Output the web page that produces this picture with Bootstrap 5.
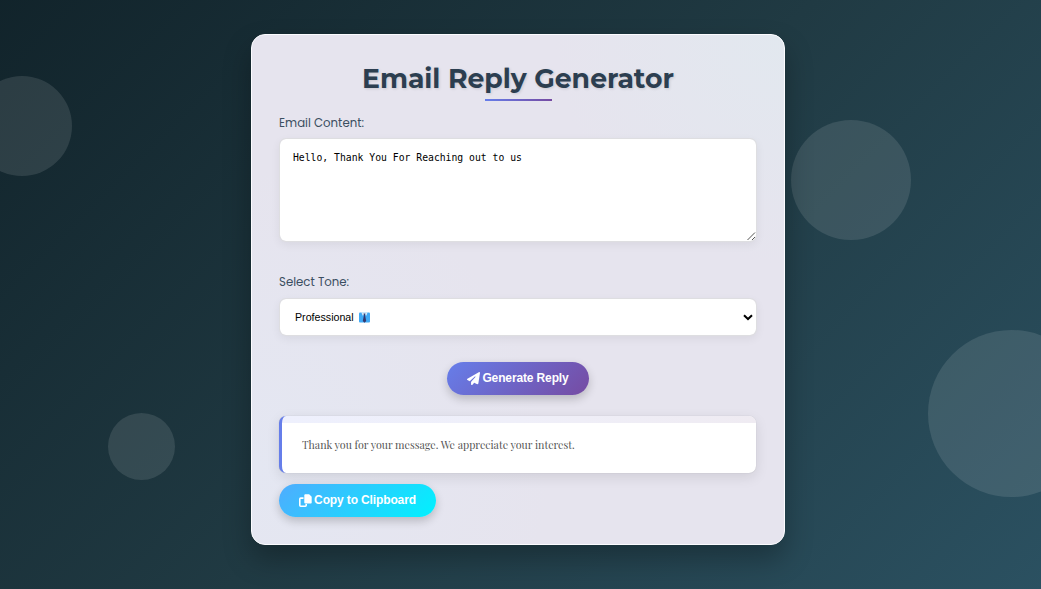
<!DOCTYPE html>
<html lang="en">
<head>
<meta charset="utf-8">
<meta name="viewport" content="width=device-width, initial-scale=1">
<title>Email Reply Generator</title>
<link rel="stylesheet" href="https://cdn.jsdelivr.net/npm/bootstrap@5.3.0/dist/css/bootstrap.min.css">
<style>
body{background:linear-gradient(135deg,#0f2027 -8%,#203a43 50%,#2c5364 105%);min-height:589px;height:100vh;overflow:hidden;font-family:"Liberation Sans",sans-serif}
.orb{border-radius:50%;background:rgba(255,255,255,.11)}
.orb-a{width:100px;height:100px;left:-28px;top:76px}
.orb-b{width:120px;height:120px;left:791px;top:120px}
.orb-wrap{width:113px;height:167px;left:928px;top:330px;overflow:hidden}
.orb-c{width:167px;height:167px}
.orb-d{width:67px;height:67px;left:108px;top:413px}
.panel{width:534px;height:511px;margin:34px 0 0 251px;padding:27px;border:1px solid #fcfcff;border-radius:14px;
background:radial-gradient(circle at 100% 0,#e2e8ef 0,rgba(226,232,239,0) 230px),radial-gradient(circle at 0 85%,#e4e7f2 0,rgba(228,231,242,0) 300px),#e6e4ee;box-shadow:0 14px 28px rgba(0,0,0,.28)}
.title{font:700 26.67px/33px "Montserrat",sans-serif;color:#2c3e50;text-shadow:1px 1px 3px rgba(0,0,0,.13);white-space:nowrap}
.rule{width:67px;height:2px;background:linear-gradient(90deg,#667eea,#764ba2);margin-top:4px}
.lbl{font:400 11.75px/18px "Poppins",sans-serif;color:#3b4e61}
.field{border-radius:7px;background:#fff;border:1px solid rgba(222,222,224,.9);background-clip:padding-box;box-shadow:0 3px 10px rgba(0,0,0,.06);color:#000;width:478px}
.message{display:block;height:104px;padding:11px 13px;font:9.76px/15px "DejaVu Sans Mono",monospace;resize:none;outline:0}
.tone{height:38px;padding:0 15px;font:10.67px/36px "Liberation Sans",sans-serif}
.pill{border-radius:40px;height:33px;color:#fff;font:700 12px/33px "Liberation Sans",sans-serif;letter-spacing:-.13px;padding:0;border:0;box-shadow:0 4px 10px rgba(0,0,0,.2);white-space:nowrap}
.pill-send{width:142px;background:linear-gradient(135deg,#667eea,#764ba2)}
.pill-copy{width:157px;background:linear-gradient(135deg,#4facfe,#00f2fe)}
.reply{height:57px;width:477px;border-left:3px solid #667eea;border-radius:7px;background:linear-gradient(90deg,#eef0fd,#efeff9 50%,#efebf2) top/100% 7px no-repeat,#fff;box-shadow:0 4px 13px rgba(0,0,0,.1),0 0 1px rgba(0,0,0,.22);padding:19px 20px;font:10.67px/20px "Playfair Display","Liberation Serif",serif;color:#555}
</style>
</head>
<body class="position-relative">
<div class="orb orb-a position-absolute"></div>
<div class="orb orb-b position-absolute"></div>
<div class="orb-wrap position-absolute"><div class="orb orb-c"></div></div>
<div class="orb orb-d position-absolute"></div>
<div class="d-flex">
<main class="panel position-relative flex-shrink-0">
  <div class="d-flex flex-column align-items-center">
    <h1 class="title mb-0">Email Reply Generator</h1>
    <div class="rule"></div>
  </div>
  <label class="lbl d-block" for="msg" style="margin-top:13px">Email Content:</label>
  <div class="position-relative" style="margin-top:6px">
    <textarea class="field message" id="msg" spellcheck="false">Hello, Thank You For Reaching out to us</textarea>
    <svg class="position-absolute" style="left:468px;top:94px" width="9" height="9" viewBox="0 0 9 9" stroke="#555" fill="none"><path d="M.5 8 8 .5M5 8l3-3"/></svg>
  </div>
  <div class="lbl" style="margin-top:31px">Select Tone:</div>
  <div class="field tone position-relative d-flex align-items-center" style="margin-top:7px">
    <span>Professional</span>
    <svg style="margin-left:5px" width="11" height="11" viewBox="0 0 11 11"><rect y=".6" width="11" height="10" rx="1" fill="#40a9f5"/><path d="M2.300.3h6.400L7.300 3.800 5.500 2.300 3.700 3.800z" fill="#d8ecfa"/><path d="M4.600 1.500h1.800L6.100 3.500 7.200 9l-1.700 1.700L3.800 9l1.100-5.500z" fill="#34386f"/></svg>
    <svg class="position-absolute" style="left:463px;top:15px" width="10" height="7" viewBox="0 0 10 7" fill="none" stroke="#000" stroke-width="2"><path d="M1 1.200 5 5l4-3.800"/></svg>
  </div>
  <div class="d-flex justify-content-center" style="margin-top:26px">
    <button class="pill pill-send d-flex align-items-center justify-content-center">
      <svg width="13" height="13" viewBox="0 0 512 512" fill="#fff" style="margin-right:2px"><path d="M498 5.600c10 7 15 19 13 31l-64 416c-2 10-8 18-16 23s-19 5-28 2l-120-50-68 74c-9 10-23 13-35 8s-20-17-20-30v-84c0-4 2-8 4-11l168-183c6-6 6-16 0-22s-16-6-22-1L106 360l-89-44C7 311 0 300 0 289s6-22 16-28L464 5c11-6 24-6 34 .6z"/></svg><span>Generate Reply</span>
    </button>
  </div>
  <div class="reply" style="margin-top:21px">Thank you for your message. We appreciate your interest.</div>
  <button class="pill pill-copy d-flex align-items-center justify-content-center" style="margin-top:11px">
    <svg width="13" height="13" viewBox="0 0 13 13" style="margin-right:2px"><path d="M4.500 4.100H1.700a.9.900 0 0 0-.9.900v6.300c0 .5.400.9.900.9h4.600c.5 0 .9-.4.900-.9V10" fill="none" stroke="#fff" stroke-width="1.600"/><path d="M6.500.2h3.600l2.600 2.600v5.600c0 .7-.5 1.200-1.200 1.200H6.500c-.7 0-1.200-.5-1.200-1.200v-7C5.300.7 5.800.2 6.500.2z" fill="#fff"/></svg><span>Copy to Clipboard</span>
  </button>
</main>
</div>
<script src="https://cdn.jsdelivr.net/npm/bootstrap@5.3.0/dist/js/bootstrap.bundle.min.js"></script>
</body>
</html>
